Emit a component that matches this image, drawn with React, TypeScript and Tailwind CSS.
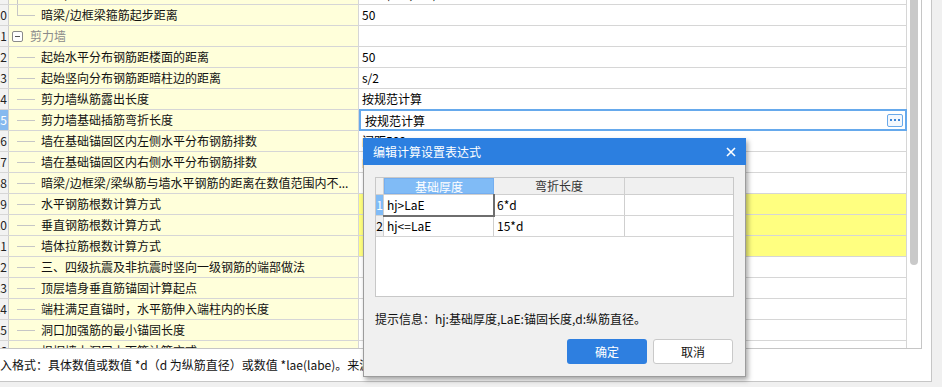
import React from "react";

type Kind = "mid" | "last" | "child" | "group";
type Row = { n: number; name: string; value?: string; kind: Kind; hl?: boolean; sel?: boolean };

const rows: Row[] = [
  { n: 9, name: "暗梁/边框梁箍筋加密区长度", value: "max(2*h,500)", kind: "mid" },
  { n: 10, name: "暗梁/边框梁箍筋起步距离", value: "50", kind: "last" },
  { n: 11, name: "剪力墙", kind: "group" },
  { n: 12, name: "起始水平分布钢筋距楼面的距离", value: "50", kind: "child" },
  { n: 13, name: "起始竖向分布钢筋距暗柱边的距离", value: "s/2", kind: "child" },
  { n: 14, name: "剪力墙纵筋露出长度", value: "按规范计算", kind: "child" },
  { n: 15, name: "剪力墙基础插筋弯折长度", value: "按规范计算", kind: "child", sel: true },
  { n: 16, name: "墙在基础锚固区内左侧水平分布钢筋排数", value: "间距500", kind: "child" },
  { n: 17, name: "墙在基础锚固区内右侧水平分布钢筋排数", value: "间距500", kind: "child" },
  { n: 18, name: "暗梁/边框梁/梁纵筋与墙水平钢筋的距离在数值范围内不...", value: "", kind: "child" },
  { n: 19, name: "水平钢筋根数计算方式", value: "", kind: "child", hl: true },
  { n: 20, name: "垂直钢筋根数计算方式", value: "", kind: "child", hl: true },
  { n: 21, name: "墙体拉筋根数计算方式", value: "", kind: "child", hl: true },
  { n: 22, name: "三、四级抗震及非抗震时竖向一级钢筋的端部做法", value: "", kind: "child" },
  { n: 23, name: "顶层墙身垂直筋锚固计算起点", value: "", kind: "child" },
  { n: 24, name: "端柱满足直锚时，水平筋伸入端柱内的长度", value: "", kind: "child" },
  { n: 25, name: "洞口加强筋的最小锚固长度", value: "", kind: "child" },
  { n: 26, name: "根据墙上洞口上下筋计算方式", value: "", kind: "child" },
];

function Connector({ kind }: { kind: Kind }) {
  return (
    <svg width="32" height="20" className="shrink-0">
      {kind === "mid" && <line x1="8.5" y1="0" x2="8.5" y2="20" stroke="#c6c6c6" strokeWidth="1" />}
      {kind === "last" && <line x1="8.5" y1="0" x2="8.5" y2="10.5" stroke="#c6c6c6" strokeWidth="1" />}
      <line x1="8" y1="10.5" x2="26" y2="10.5" stroke="#c6c6c6" strokeWidth="1" />
    </svg>
  );
}

function TableRow({ r }: { r: Row }) {
  return (
    <div className="flex h-[21px] border-b border-[#d6d6d6]">
      <div
        className={
          "w-[25px] shrink-0 border-r border-[#cfcfcf] text-right pr-[1px] leading-[20px] " +
          (r.sel ? "bg-[#86b9ef] text-white" : "bg-[#f2f2f2] text-[#222]")
        }
      >
        {r.n}
      </div>
      <div className="w-[350px] shrink-0 border-r border-[#d6d6d6] bg-[#ffffda] flex items-center overflow-hidden whitespace-nowrap">
        {r.kind === "group" ? (
          <>
            <div className="ml-[3px] w-[11px] h-[11px] border border-[#8a8a8a] rounded-[2px] bg-white flex items-center justify-center shrink-0">
              <div className="w-[5px] h-[1px] bg-[#555]" />
            </div>
            <span className="ml-[7px] text-[#8a8a8a] leading-[20px]">{r.name}</span>
          </>
        ) : (
          <>
            <Connector kind={r.kind} />
            <span className="leading-[20px] text-[#111]">{r.name}</span>
          </>
        )}
      </div>
      <div
        className={
          "relative w-[548px] shrink-0 border-r border-[#d6d6d6] pl-[3px] leading-[20px] whitespace-nowrap " +
          (r.hl ? "bg-[#ffff80]" : "bg-white")
        }
      >
        {r.sel ? (
          <div className="absolute -top-[1px] -bottom-[1px] left-0 -right-[1px] border-2 border-[#66a9ec] bg-white flex items-center justify-between pl-[4px] pr-[2px]">
            <span className="leading-[17px]">{r.value}</span>
            <div className="w-[16px] h-[13px] border border-[#6aa9ea] rounded-[2px] bg-[#f4f8fd] flex items-center justify-center gap-[2px]">
              <div className="w-[2px] h-[2px] bg-[#3f86d6]" />
              <div className="w-[2px] h-[2px] bg-[#3f86d6]" />
              <div className="w-[2px] h-[2px] bg-[#3f86d6]" />
            </div>
          </div>
        ) : (
          r.value
        )}
      </div>
    </div>
  );
}

function Dialog() {
  return (
    <div className="absolute left-[363px] top-[138px] w-[383px] h-[239px] bg-[#f0f0f0] border border-[#9c9c9c] shadow-[2px_3px_5px_rgba(0,0,0,0.35)] flex flex-col">
      <div className="-mx-[1px] -mt-[1px] h-[27px] bg-[#2c7fe0] text-white flex items-center justify-between pl-[10px] pr-[10px] shrink-0">
        <span className="text-[12px] leading-[20px]">编辑计算设置表达式</span>
        <svg width="10" height="10" viewBox="0 0 10 10">
          <path d="M1 1L9 9M9 1L1 9" stroke="white" strokeWidth="1.6" />
        </svg>
      </div>
      <div className="pl-[11px] pr-[11px] pt-[12px] flex flex-col">
        <div className="w-[359px] h-[120px] bg-white border border-[#c8c8c8]">
          <div className="flex h-[17px] border-b border-[#cfcfcf] bg-[#f0f0f0]">
            <div className="w-[8px] border-r border-[#cfcfcf]" />
            <div className="w-[110px] border border-[#74aef0] bg-[#80bbf6] text-white text-center leading-[15px]">基础厚度</div>
            <div className="w-[131px] border-r border-[#cfcfcf] text-center text-[#333] leading-[16px]">弯折长度</div>
          </div>
          <div className="flex h-[21px] border-b border-[#d4d4d4]">
            <div className="w-[8px] border-r border-[#cfcfcf] bg-[#80bbf6] text-white text-center leading-[20px] text-[12px]">1</div>
            <div className="relative w-[110px] border-r border-[#cfcfcf] pl-[3px] leading-[20px]">
              hj&gt;LaE
              <div className="absolute -top-[1px] left-[-1px] right-[-2px] bottom-[-2px] border-r-2 border-b-2 border-[#6e6e6e]" />
            </div>
            <div className="w-[131px] border-r border-[#cfcfcf] pl-[3px] leading-[20px]">6*d</div>
          </div>
          <div className="flex h-[21px] border-b border-[#d4d4d4]">
            <div className="w-[8px] border-r border-[#cfcfcf] bg-[#f0f0f0] text-center leading-[20px]">2</div>
            <div className="w-[110px] border-r border-[#cfcfcf] pl-[3px] leading-[20px]">hj&lt;=LaE</div>
            <div className="w-[131px] border-r border-[#cfcfcf] pl-[3px] leading-[20px]">15*d</div>
          </div>
        </div>
        <div className="mt-[12px] leading-[20px] text-[#111] whitespace-nowrap">
          提示信息：hj:基础厚度,LaE:锚固长度,d:纵筋直径。
        </div>
        <div className="mt-[10px] flex justify-end gap-[6px] pr-[1px]">
          <div className="w-[80px] h-[25px] rounded-[3px] bg-[#2e7fe0] text-white flex items-center justify-center">确定</div>
          <div className="w-[80px] h-[25px] rounded-[3px] bg-white border border-[#c9c9c9] flex items-center justify-center text-[#111]">取消</div>
        </div>
      </div>
    </div>
  );
}

export default function App() {
  return (
    <div className="relative w-[942px] h-[387px] overflow-hidden bg-[#f0f0f0] text-[12px] text-black font-['Noto_Sans_CJK_SC','Noto_Sans',sans-serif]">
      <div className="w-[932px] h-[382px] bg-white border-r border-b border-[#c6c6c6] flex flex-col">
        <div className="w-[922px] h-[349px] shrink-0 border-r border-b border-[#c6c6c6] flex overflow-hidden">
          <div className="w-[907px] h-full overflow-hidden shrink-0">
            <div className="-mt-[16px] -ml-[16px] w-[923px]">
              {rows.map((r) => (
                <TableRow key={r.n} r={r} />
              ))}
            </div>
          </div>
          <div className="flex-1">
            <div className="ml-[3px] w-[8px] h-[265px] bg-[#c9c9c9] rounded-b-[4px]" />
          </div>
        </div>
        <div className="flex-1 flex items-center overflow-hidden">
          <span className="-ml-[12px] whitespace-nowrap text-[#111]">
            输入格式：具体数值或数值 *d（d 为纵筋直径）或数值 *lae(labe)。来源于规范和图集。
          </span>
        </div>
      </div>
      <Dialog />
    </div>
  );
}
